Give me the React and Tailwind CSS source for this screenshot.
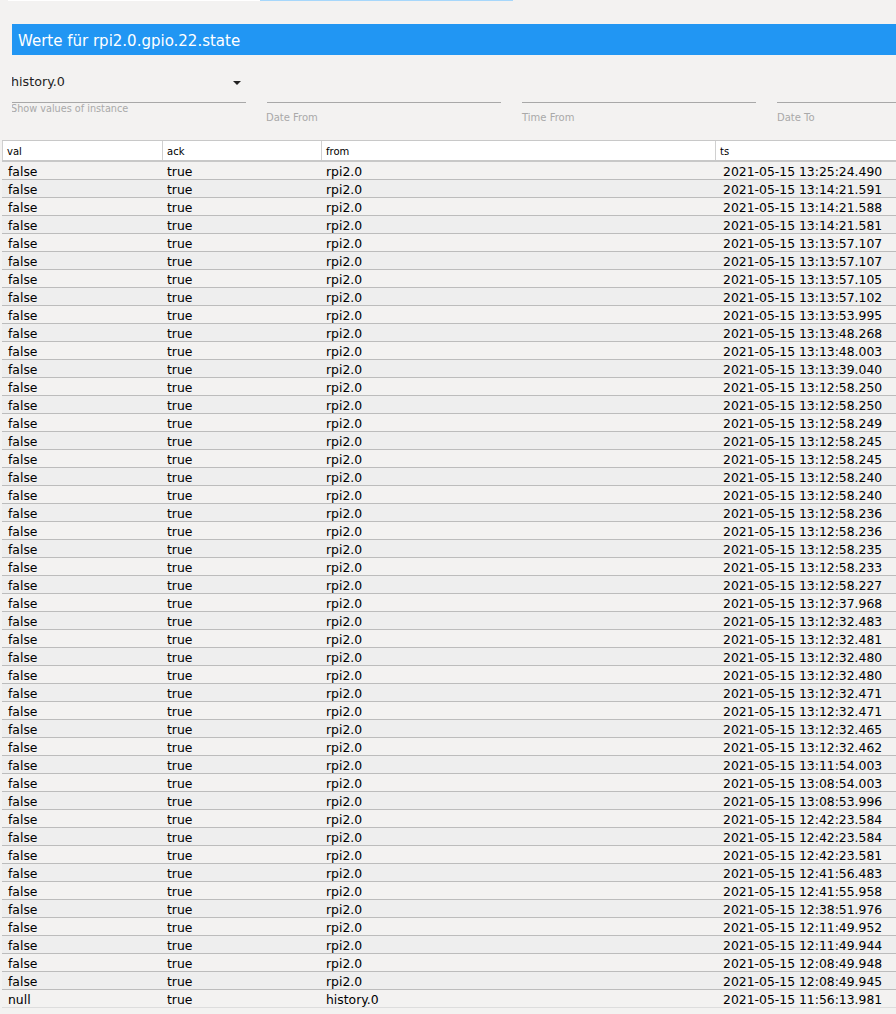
const ts = `2021-05-15 13:25:24.490
2021-05-15 13:14:21.591
2021-05-15 13:14:21.588
2021-05-15 13:14:21.581
2021-05-15 13:13:57.107
2021-05-15 13:13:57.107
2021-05-15 13:13:57.105
2021-05-15 13:13:57.102
2021-05-15 13:13:53.995
2021-05-15 13:13:48.268
2021-05-15 13:13:48.003
2021-05-15 13:13:39.040
2021-05-15 13:12:58.250
2021-05-15 13:12:58.250
2021-05-15 13:12:58.249
2021-05-15 13:12:58.245
2021-05-15 13:12:58.245
2021-05-15 13:12:58.240
2021-05-15 13:12:58.240
2021-05-15 13:12:58.236
2021-05-15 13:12:58.236
2021-05-15 13:12:58.235
2021-05-15 13:12:58.233
2021-05-15 13:12:58.227
2021-05-15 13:12:37.968
2021-05-15 13:12:32.483
2021-05-15 13:12:32.481
2021-05-15 13:12:32.480
2021-05-15 13:12:32.480
2021-05-15 13:12:32.471
2021-05-15 13:12:32.471
2021-05-15 13:12:32.465
2021-05-15 13:12:32.462
2021-05-15 13:11:54.003
2021-05-15 13:08:54.003
2021-05-15 13:08:53.996
2021-05-15 12:42:23.584
2021-05-15 12:42:23.584
2021-05-15 12:42:23.581
2021-05-15 12:41:56.483
2021-05-15 12:41:55.958
2021-05-15 12:38:51.976
2021-05-15 12:11:49.952
2021-05-15 12:11:49.944
2021-05-15 12:08:49.948
2021-05-15 12:08:49.945
2021-05-15 11:56:13.981`.split("\n");

function Field({ label, labelClass }) {
  return (
    <div className="w-[234px] shrink-0 mr-[21px]">
      <div className="h-[34px] border-b border-[#a8a8a8]" />
      <div className={`mt-[8px] text-[10px] leading-[14px] text-[#a9a9a9] ${labelClass}`}>{label}</div>
    </div>
  );
}

export default function App() {
  return (
    <div className="w-[896px] h-[1014px] overflow-hidden bg-[#f3f2f1] font-['DejaVu_Sans',sans-serif] text-black">
      <div className="flex h-px ml-2">
        <div className="w-[252px] bg-white" />
        <div className="w-[253px] bg-[#a6d7fb]" />
      </div>
      <div className="ml-3 mt-[23px] h-[31px] bg-[#2196f3] pl-[6px] text-[15px] leading-[34px] text-white overflow-hidden">
        Werte für rpi2.0.gpio.22.state
      </div>
      <div className="flex ml-3 mt-[14px] h-[71px] overflow-hidden">
        <div className="w-[234px] shrink-0 mr-[21px]">
          <div className="relative h-[34px] border-b border-[#a8a8a8] -ml-px text-[12.7px] leading-[26px] text-[#222]">
            history.0
            <span className="absolute right-[5px] top-[12px] border-x-[4px] border-t-[4px] border-x-transparent border-t-[#222]" />
          </div>
          <div className="text-[9.7px] leading-[14px] mt-[-1px] -ml-px text-[#a9a9a9]">Show values of instance</div>
        </div>
        <Field label="Date From" labelClass="-ml-px" />
        <Field label="Time From" labelClass="" />
        <Field label="Date To" labelClass="" />
      </div>
      <div className="ml-[2px] w-[894px]">
        <div className="flex h-[22px] bg-white border-y border-[#c8c8c8] border-b-2 text-[10px] leading-[21px]">
          <div className="w-[160px] pl-[4px] border-l border-[#d0d0d0]">val</div>
          <div className="w-[159px] pl-[4px] border-l border-[#d0d0d0]">ack</div>
          <div className="w-[394px] pl-[4px] border-l border-[#d0d0d0]">from</div>
          <div className="flex-1 pl-[4px] border-l border-[#d0d0d0]">ts</div>
        </div>
        {ts.map((t, i) => {
          const last = i === ts.length - 1;
          return (
            <div
              key={i}
              className={`flex h-[18px] border-b text-[12.4px] leading-[19px] ${i % 2 ? "bg-[#eeeeee]" : ""} ${last ? "border-[#dddddd]" : "border-[#bcbcbc]"}`}
            >
              <div className="w-[160px] pl-[6px]">{last ? "null" : "false"}</div>
              <div className="w-[159px] pl-[5px]">true</div>
              <div className="w-[394px] pl-[5px]">{last ? "history.0" : "rpi2.0"}</div>
              <div className="flex-1 pl-[8px] whitespace-nowrap">{t}</div>
            </div>
          );
        })}
      </div>
    </div>
  );
}
